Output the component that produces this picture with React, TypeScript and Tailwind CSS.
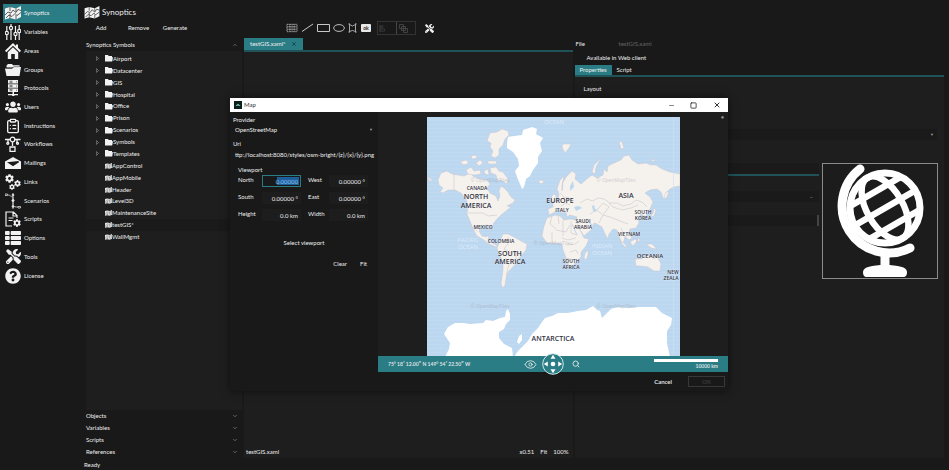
import React from "react";
import { FaQuestionCircle, FaThList, FaTools, FaCog, FaUsers } from "react-icons/fa";
import { ChevronDown, ChevronUp, ClipboardList, Minus, Square, X, Eye, Search } from "lucide-react";

type SvgProps = { className?: string };

const MapGlyph = ({ className }: SvgProps) => (
  <svg viewBox="0 0 16 14" className={className} aria-hidden="true">
    <path d="M0 2.500 5 1l6 1.500L16 0v11l-5 2.500L5 12 0 13.500Z" fill="#f2f2f2" />
    <path d="M5 1v4M5 7.500v4.500M11 2.500V6M11 9v4.500M0 9l3-3 3 1 2-3 3 2.500 2-3 3 1M1 12l3-3 3 1.500 3-3 2 2 4-3" fill="none" stroke="#3a3a3a" strokeWidth=".8" />
  </svg>
);

const SlidersGlyph = () => (
  <svg viewBox="0 0 16 16" className="size-4" fill="none" stroke="#f2f2f2" strokeWidth="1.200">
    <path d="M1.800 2v5M1.800 11v5M6 0v2M6 6v10M10.500 2v6M10.500 12v4M14.200 1v4M14.200 9v7" />
    <circle cx="1.800" cy="9" r="1.600" />
    <circle cx="6" cy="4" r="1.600" />
    <circle cx="10.500" cy="10" r="1.600" />
    <circle cx="14.200" cy="7" r="1.600" />
  </svg>
);

const HomeGlyph = () => (
  <svg viewBox="0 0 16 16" className="size-4" fill="#f2f2f2">
    <path d="M8 0 0 7.700l1.300 1.500L8 2.800l6.700 6.400L16 7.700l-3-2.900V1.500h-2v1.400z" />
    <path d="M2.800 9.200 8 4.200l5.200 5V16H9.800v-5H6.200v5H2.800z" />
  </svg>
);

const FolderGlyph = () => (
  <svg viewBox="0 0 16 16" className="size-4" fill="#f2f2f2">
    <path d="M1.500 5.500V3.500L3 2h4l1 1.200h6.500v2.300z" />
    <path d="M0 6.500h7L9 5h7l-1.500 9h-13z" />
    <path d="M1 6.200h6L9 4.700h5.500" stroke="#1a1a1a" strokeWidth=".5" fill="none" />
  </svg>
);

const ServerGlyph = () => (
  <svg viewBox="0 0 16 16" className="size-4" fill="#f2f2f2">
    <path d="M3 0h10v3.500H3zM3 4.200h10v3.500H3zM3 8.400h10v3.500H3zM7.500 12h1.500v2h4v1.200H9.700a1.500 1.500 0 0 1-2.800 0H3V14h4.500z" />
    <path d="M4.500 1.200h3M4.500 2.400h3M4.500 5.400h3M4.500 6.600h3M4.500 9.600h3M4.500 10.800h3M11 1.800h1M11 6h1M11 10.200h1" stroke="#1a1a1a" strokeWidth=".6" />
  </svg>
);

const FlowGlyph = () => (
  <svg viewBox="0 0 16 16" className="size-4" fill="none" stroke="#f2f2f2" strokeWidth="1.300">
    <circle cx="7.500" cy="3.500" r="2.300" />
    <path d="M0 3.500h5M10 3.500h5.500M7.500 6v4M3 7.500v-4M12 3.500v4M5 11h5v4.500H5z" />
    <circle cx="2.800" cy="7.300" r="1" />
    <circle cx="12.500" cy="7.300" r="1" />
  </svg>
);

const MailGlyph = () => (
  <svg viewBox="0 0 16 16" className="size-4">
    <path d="M8 2 0 6.500V14h16V6.500Z" fill="#f2f2f2" />
    <path d="M2 7.200 13.500 6l.5 1.200-6 4z" fill="#1a1a1a" />
    <path d="M0 7v7h16V7l-8 4.500z" fill="#f2f2f2" />
  </svg>
);

const GearsGlyph = () => (
  <span className="relative block size-4 text-[#f2f2f2]">
    <FaCog className="absolute left-0 top-0 size-[9px]" />
    <FaCog className="absolute right-0 top-[6px] size-[7px]" />
    <FaCog className="absolute bottom-0 left-[4px] size-[6px]" />
  </span>
);

const ScenarioGlyph = () => (
  <svg viewBox="0 0 16 16" className="size-4" fill="none" stroke="#d8d8d8">
    <path d="M0 1h2.500v1.500H0zM3 2c3 0 2 2 5 2v8c0 2 3 2 5 2M13 13.500h2.500V15H13zM8 0v16" strokeWidth=".8" />
    <circle cx="8" cy="2" r=".9" fill="#fff" />
    <circle cx="8" cy="7.500" r="1.100" fill="#fff" />
    <circle cx="8" cy="13.500" r=".9" fill="#fff" />
  </svg>
);

const ScriptGlyph = () => (
  <span className="relative block size-4 text-[#f2f2f2]">
    <svg viewBox="0 0 16 16" className="size-4" fill="none" stroke="#f2f2f2" strokeWidth="1.200">
      <path d="M7 15H1V1h7.500L12 4.500V7M8 1v4h4M3.500 7h5M3.500 9.500h4" />
    </svg>
    <FaCog className="absolute bottom-0 right-0 size-2" />
  </span>
);

const NAV: { label: string; icon: React.ReactNode }[] = [
  { label: "Synoptics", icon: <MapGlyph className="h-[14px] w-4" /> },
  { label: "Variables", icon: <SlidersGlyph /> },
  { label: "Areas", icon: <HomeGlyph /> },
  { label: "Groups", icon: <FolderGlyph /> },
  { label: "Protocols", icon: <ServerGlyph /> },
  { label: "Users", icon: <FaUsers className="size-4" /> },
  { label: "Instructions", icon: <ClipboardList className="size-4" strokeWidth={2} /> },
  { label: "Workflows", icon: <FlowGlyph /> },
  { label: "Mailings", icon: <MailGlyph /> },
  { label: "Links", icon: <GearsGlyph /> },
  { label: "Scenarios", icon: <ScenarioGlyph /> },
  { label: "Scripts", icon: <ScriptGlyph /> },
  { label: "Options", icon: <FaThList className="size-4" /> },
  { label: "Tools", icon: <FaTools className="size-[15px]" /> },
  { label: "License", icon: <FaQuestionCircle className="size-4" /> },
];

const FOLDERS = ["Airport", "Datacenter", "GIS", "Hospital", "Office", "Prison", "Scenarios", "Symbols", "Templates"];
const FILES = ["AppControl", "AppMobile", "Header", "Level3D", "MaintenanceSite", "testGIS*", "WallMgmt"];

function Sidebar() {
  return (
    <nav className="w-[78px] shrink-0 pl-[3px] pt-1">
      <div className="grid h-[281px] auto-rows-fr">
        {NAV.map((n, i) => (
          <button
            key={n.label}
            className={`flex items-center gap-[3px] pl-[2px] text-left ${i === 0 ? "bg-[#2a7d85]" : ""}`}
          >
            <span className="flex w-4 shrink-0 justify-center text-[#f2f2f2]">{n.icon}</span>
            {n.label}
          </button>
        ))}
      </div>
    </nav>
  );
}

function DrawTools() {
  return (
    <div className="flex items-center gap-[3px] text-[#c8c8c8]">
      <button aria-label="Select">
        <svg viewBox="0 0 13 10" className="h-[10px] w-[12px]" fill="none" stroke="currentColor">
          <path d="M1 1h11v8H1zM1 3.700h11M1 6.300h11M4 1v8M6.500 1v8M9 1v8" strokeDasharray="1 .7" strokeWidth=".9" />
        </svg>
      </button>
      <button aria-label="Line">
        <svg viewBox="0 0 13 10" className="h-[10px] w-[13px]" stroke="currentColor"><path d="M1 8.500 12 1" /></svg>
      </button>
      <button aria-label="Rectangle">
        <svg viewBox="0 0 13 10" className="h-[10px] w-[13px]" fill="none" stroke="currentColor"><path d="M.5 1.500h12v7H.5z" /></svg>
      </button>
      <button aria-label="Ellipse">
        <svg viewBox="0 0 13 10" className="h-[10px] w-[12px]" fill="none" stroke="currentColor"><ellipse cx="6.500" cy="5" rx="5.800" ry="3.700" /></svg>
      </button>
      <button aria-label="Polygon">
        <svg viewBox="0 0 9 10" className="h-[10px] w-[9px]" fill="none" stroke="currentColor">
          <path d="M1.500 1.500 4.500 3l3-1.500v7l-3-1-3 1z" strokeWidth=".8" />
          <path d="M.5 1h1.500M7 1h1.500M.5 9h1.500M7 9h1.500" />
        </svg>
      </button>
      <button className="ml-px flex h-2 w-[10px] items-center justify-center rounded-[1px] bg-[#e8e8e8] text-[5px] leading-none font-bold text-[#222]">ok</button>
      <div className="ml-[3px] flex h-[14px] w-[39px] border border-[#333] text-[#4a4a4a]">
        <button aria-label="Align" className="flex w-[18px] items-center pl-px">
          <svg viewBox="0 0 9 9" className="size-[7px]" fill="none" stroke="currentColor"><path d="M1 0v9M2 1h3v2H2zM2 5h5v3H2z" strokeWidth=".8" /></svg>
        </button>
        <button aria-label="Order" className="flex flex-1 items-center border-l border-[#444] pl-[2px]">
          <svg viewBox="0 0 9 9" className="size-[9px]" fill="none" stroke="currentColor"><path d="M.5.500h4v4h-4zM2.500 2.500h4v4h-4zM4.500 4.500h4v4h-4z" strokeWidth=".8" /></svg>
        </button>
      </div>
      <button aria-label="Settings" className="ml-[6px] text-[#f0f0f0]"><FaTools className="size-[9px]" /></button>
    </div>
  );
}

function SymbolPanel() {
  return (
    <section className="flex w-[158px] shrink-0 flex-col">
      <button className="flex h-[13px] items-center justify-between pl-[2px] pr-1 text-left">
        Synoptics Symbols
        <ChevronUp className="size-[6px] text-[#999]" />
      </button>
      <div className="ml-[2px] flex-1 bg-[#1e1e1e] pt-[2px]">
        <ul className="grid h-[190px] auto-rows-fr">
          {FOLDERS.map((f) => (
            <li key={f} className="flex items-center pl-[10px]">
              <svg viewBox="0 0 4 6" className="mr-[6px] h-[5px] w-[3px]" fill="none" stroke="#999"><path d="M.5.500 3.500 3 .5 5.500z" strokeWidth=".8" /></svg>
              <svg viewBox="0 0 8 7" className="h-[7px] w-2" fill="#f2f2f2"><path d="M0 0h3l.7 1H7v5.500H0zM.5 2.200h7.500L7.200 6.500H0z" /></svg>
              {f}
            </li>
          ))}
          {FILES.map((f) => (
            <li key={f} className={`flex items-center pl-[19px] ${f === "testGIS*" ? "bg-[#1a1a1a]" : ""}`}>
              <MapGlyph className="h-[6px] w-[7px]" />
              {f}
            </li>
          ))}
        </ul>
      </div>
      {["Objects", "Variables", "Scripts", "References"].map((s) => (
        <button key={s} className="flex h-[12px] items-center justify-between pl-[2px] pr-1 text-left">
          {s}
          <ChevronDown className="size-[6px] text-[#aaa]" />
        </button>
      ))}
    </section>
  );
}

function Editor() {
  return (
    <section className="ml-[2px] flex min-w-0 flex-[329] flex-col">
      <div className="flex border-b-2 border-[#1f5357]">
        <button className="flex h-[12px] w-[59px] items-center justify-between bg-[#2a7d85] px-[6px]">
          <span>testGIS.xaml*</span>
          <X className="size-[6px] text-[#123c40]" strokeWidth={3} />
        </button>
      </div>
      <div className="flex flex-1 flex-col justify-end bg-[#1e1e1e]">
        <div className="flex h-[12px] items-center pl-[2px] pr-1">
          <span className="flex-1">testGIS.xaml</span>
          <span className="flex gap-[6px]"><span>x0.51</span><span>Fit</span><span>100%</span></span>
        </div>
      </div>
    </section>
  );
}

const Globe = () => (
  <svg viewBox="0 0 114 114" className="size-[114px]" fill="none" stroke="#fff" role="img" aria-label="Globe">
    <path d="M37 5A47 47 0 0 0 87 84" strokeWidth="9" strokeLinecap="round" />
    <circle cx="62" cy="44" r="35" strokeWidth="7" />
    <g transform="rotate(-30 62 44)" strokeWidth="6.500">
      <ellipse cx="62" cy="44" rx="18" ry="35" />
      <path d="M32 25h60M27 44h70M32 63h60" />
    </g>
    <path d="M62 92v12" strokeWidth="9" />
    <path d="M40 108c0-5 9-7 22-7s22 2 22 7c0 3-1 5-4 5H44c-3 0-4-2-4-5z" fill="#fff" stroke="none" />
  </svg>
);

function Properties() {
  return (
    <section className="ml-[2px] mr-[5px] flex min-w-0 flex-[370] flex-col">
      <div className="flex h-[12px] items-center">
        <span className="w-[44px] pl-px">File</span>
        <span className="text-[#666]">testGIS.xaml</span>
      </div>
      <div className="flex h-[15px] items-center pl-[12px]">Available in Web client</div>
      <div className="flex h-[12px] border-b-2 border-[#1f5357]">
        <button className="w-[37px] bg-[#2a7d85]">Properties</button>
        <button className="px-[5px]">Script</button>
      </div>
      <div className="flex-1 bg-[#1e1e1e] pt-1">
        <div className="flex h-[16px] items-center pl-[9px]">Layout</div>
        <div className="mt-[32px] mr-[7px] flex h-[11px] items-center justify-end bg-[#1a1a1a] pr-[3px]">
          <span className="text-[4px] text-[#999]">▼</span>
        </div>
        <div className="mt-[23px] mr-[6px] flex gap-[3px]">
          <div className="flex-1">
            <div className="h-[13px] border-b-2 border-[#1f5357] bg-[#1a1a1a]" />
            <div className="mt-[15px] flex h-[11px] items-center justify-end bg-[#1a1a1a] pr-[6px] text-[#999]">–</div>
            <div className="mt-[13px] flex h-[11px] justify-end bg-[#1a1a1a]"><span className="w-[2px] bg-[#444]" /></div>
          </div>
          <div className="border border-[#8a8a8a] bg-[#1c1c1c]"><Globe /></div>
        </div>
      </div>
    </section>
  );
}

const LAND = [
  // North and Central America
  "438,180 441,173 447,171 452,174 458,175 464,176 470,173 474,177 481,179 487,180 490,184 487,188 490,193 496,196 498,201 500,196 499,191 501,186 504,188 508,192 511,197 515,200 513,203 507,206 511,207 506,211 501,215 497,219 493,224 494,229 491,226 486,225 481,226 479,231 482,236 486,237 489,235 488,240 492,243 498,246 496,247 489,244 484,240 477,236 473,229 470,221 467,214 468,206 466,199 461,193 455,190 448,190 443,193 440,192 443,188 439,185",
  // Arctic islands
  "490,168 496,167 499,171 503,172 508,179 507,184 501,180 498,181 496,175 491,173",
  "466,170 471,167 474,171 480,170 481,174 474,175 468,174",
  "460,162 466,160 469,163 464,165",
  "471,156 476,155 477,158 472,159",
  "476,163 480,160 483,163 479,166",
  "487,161 497,161 496,164 489,164",
  "484,171 488,169 489,175 485,174",
  "487,141 490,133 497,132 502,129 508,131 509,135 505,139 503,145 499,149 499,155 495,158 491,156 493,151 490,147 491,143",
  "427,176 431,179 433,182 429,180",
  "538,181 542,180 544,182 541,184",
  // South America
  "503,234 508,234 514,237 521,241 527,244 526,250 520,257 517,262 512,268 508,272 506,278 505,285 503,288 501,284 503,270 503,262 499,254 497,248 500,241",
  // Europe and Asia
  "562,191 563,182 567,176 572,171 576,174 575,179 581,184 588,178 592,175 597,178 603,175 604,169 607,172 608,166 614,163 621,160 624,156 629,155 632,160 638,164 646,163 651,165 656,165 662,169 670,172 680,174 680,186 674,187 670,189 667,192 666,199 663,198 661,192 657,189 650,190 645,193 650,197 653,202 650,209 646,213 647,217 644,216 641,214 638,219 639,223 636,228 630,229 629,233 632,238 629,240 625,236 624,241 622,243 619,236 617,230 613,229 609,234 608,239 605,234 602,227 597,224 594,223 592,229 584,236 580,230 576,222 577,217 570,215 567,217 566,212 562,213 559,209 555,212 549,215 548,209 553,207 553,203 558,200 559,194 557,189 560,180 564,176 562,185",
  "551,199 553,194 556,195 556,200 552,202",
  "562,147 563,144 567,144 571,144 569,148 565,153",
  "592,172 594,165 601,158 596,167 595,174",
  "619,141 622,142 624,148 621,149",
  "651,159 655,160 653,162",
  "664,197 666,192 669,192 666,199",
  // Africa
  "547,218 555,215 560,216 564,220 570,219 576,220 580,230 584,238 589,239 586,246 581,252 581,257 576,262 573,266 569,266 566,258 563,250 562,244 554,243 547,243 542,236 544,226",
  "585,253 588,250 588,255 586,260 584,258",
  // Southeast Asia and Oceania
  "630,242 635,239 637,241 633,246",
  "620,241 624,243 628,248 624,246",
  "638,237 640,240 638,243",
  "646,244 652,244 657,249 651,248",
  "650,217 653,213 654,208 656,210 654,216",
  "635,259 636,266 640,266 648,267 654,271 660,271 661,264 657,256 654,259 651,255 646,256 641,259",
];

const ICE = [
  "507,143 508,137 514,136 522,135 523,130 532,127 537,129 536,134 543,138 540,143 542,151 538,157 538,163 533,170 530,176 526,179 524,187 522,189 520,184 517,177 515,171 519,166 518,159 513,152 507,148",
  "445,357 449,349 450,343 444,334 448,327 455,323 463,323 470,324 483,323 486,320 493,321 500,318 505,317 506,311 508,309 510,314 510,320 506,324 504,329 499,332 499,338 504,344 512,348 513,357",
  "514,357 518,351 522,347 528,341 532,334 538,328 542,322 545,318 552,316 558,313 568,313 578,311 586,310 593,306 597,310 600,311 602,318 605,315 611,309 617,307 628,308 640,307 656,307 662,313 672,318 671,325 667,331 667,343 670,357",
  "517,342 519,336 522,334 522,340 519,344",
];

const SEAS = [
  "570,186 573,181 574,187 570,191",
  "574,207 579,206 582,208 576,211",
  "592,206 594,205 596,212 593,211",
  "571,223 573,225 578,236 576,234",
  "588,221 593,225 592,227",
];

const BORDERS =
  "M454 174v17M468 213h15l5 3 9-1M472 227l5 4M560 193l4 4 5 1M561 206l5-3 4 2M552 216l-2 8 6 5M558 216l1 8M556 230l10 2 4-7M563 220v16M571 221v12l6 2M552 232v10M562 238l6 2 8-2M567 245l8-1 4-3M570 252l6-2 2 4M567 258l7 2M580 203l7-4 6 2 5-3 6 1 6 4 7 0 6 3 8-2 5-4 6 2 5 5M590 214l8-5 5-6 6 4-6 8 7 2 10 4 8 3M609 203l4 4 9 3 9-2 7-3M508 237v7l-4 5 7 4 5-2v8l-5 4M505 258l4 6-3 12M603 215l-4 8M595 209l7 5M580 219l5 4 4-3M621 228l3 7";

type MapLabel = [string, number, number, number];
const LABELS: MapLabel[] = [
  ["CANADA", 477, 190, 5],
  ["NORTH", 476, 199, 7],
  ["AMERICA", 476, 208, 7],
  ["MEXICO", 483, 229, 5],
  ["COLOMBIA", 501, 243, 5],
  ["SOUTH", 510, 256, 7],
  ["AMERICA", 510, 264, 7],
  ["EUROPE", 560, 203, 7],
  ["ITALY", 562, 212, 5],
  ["SAUDI", 583, 223, 5],
  ["ARABIA", 583, 229, 5],
  ["ASIA", 626, 198, 7],
  ["SOUTH", 643, 214, 5],
  ["KOREA", 643, 220, 5],
  ["VIETNAM", 629, 236, 5],
  ["SOUTH", 571, 263, 5],
  ["AFRICA", 571, 269, 5],
  ["OCEANIA", 650, 258, 6],
  ["NEW", 673, 274, 5],
  ["ZEALA", 671, 280, 5],
  ["ANTARCTICA", 553, 341, 7],
];

function WorldMap() {
  return (
    <svg viewBox="427 117 253 239" className="h-[239px] w-[253px] bg-[#bcd7f0] font-['Open_Sans',sans-serif]" role="img" aria-label="World map">
      <defs>
        <pattern id="scan" width="8" height="4" patternUnits="userSpaceOnUse">
          <path d="M0 .5h8" stroke="#c6dcf2" strokeWidth=".6" />
        </pattern>
      </defs>
      <rect x="427" y="117" width="253" height="239" fill="url(#scan)" />
      <g fill="#f5f2ee" stroke="#cbc5cf" strokeWidth=".5" strokeLinejoin="round">
        {LAND.map((d) => <polygon key={d} points={d} />)}
      </g>
      <g fill="#fff">{ICE.map((d) => <polygon key={d} points={d} />)}</g>
      <g fill="#bcd7f0">{SEAS.map((d) => <polygon key={d} points={d} />)}</g>
      <path d={BORDERS} fill="none" stroke="#cdc6c9" strokeWidth=".6" />
      <path d="M673.500 117v239" stroke="#d2dfee" strokeWidth=".6" />
      <g fontSize="6" textAnchor="middle" fill="#dcebfa">
        <text x="554" y="124">OCEAN</text>
        <text x="468" y="242">PACIFIC</text>
        <text x="468" y="249">OCEAN</text>
        <text x="602" y="248">INDIAN</text>
        <text x="602" y="255">OCEAN</text>
      </g>
      <g fontSize="5" textAnchor="middle" fill="#8f959c" opacity=".4">
        <text x="490" y="182">© OpenMapTiles</text>
        <text x="616" y="182">© OpenMapTiles</text>
        <text x="553" y="245">© OpenMapTiles</text>
        <text x="490" y="308">© OpenMapTiles</text>
        <text x="616" y="308">© OpenMapTiles</text>
      </g>
      <g textAnchor="middle" fill="#33333f" stroke="#fff" strokeOpacity=".5" strokeWidth=".6" paintOrder="stroke" className="font-semibold">
        {LABELS.map(([t, x, y, s]) => <text key={t + x + y} x={x} y={y} fontSize={s}>{t}</text>)}
      </g>
    </svg>
  );
}

function Coordinate({ label, value, active }: { label: string; value: string; active?: boolean }) {
  return (
    <label className="flex items-start justify-between">
      <span className="leading-[10px]">{label}</span>
      <input
        defaultValue={value}
        className={`h-[12px] w-[39px] border px-[2px] text-right outline-none ${active ? "border-[#2a7d85] bg-[linear-gradient(#1d5f9c,#1d5f9c)] bg-[length:22px_8px] bg-[position:right_1px_center] bg-no-repeat text-[#8ec4f0]" : "border-transparent bg-[#1d1d1d]"}`}
      />
    </label>
  );
}

function MapDialog() {
  return (
    <div role="dialog" aria-label="Map" className="absolute left-[230px] top-[98px] flex w-[498px] flex-col bg-[#191919] shadow-[0_0_8px_#0008]">
      <header className="flex h-[14px] items-center bg-white pl-1 text-[#333]">
        <svg viewBox="0 0 8 8" className="mr-[2px] size-2"><path d="M0 0h8v8H0z" fill="#0b1f1c" /><path d="M1.500 5 4 2.800 6.500 5H5L4 4.200 3 5z" fill="#8fd6c2" /></svg>
        <span className="flex-1">Map</span>
        <button aria-label="Minimize" className="flex w-[22px] justify-center"><Minus className="size-[7px]" /></button>
        <button aria-label="Maximize" className="flex w-[23px] justify-center"><Square className="size-[7px]" strokeWidth={3} /></button>
        <button aria-label="Close" className="flex w-[23px] justify-center"><X className="size-2" strokeWidth={3} /></button>
      </header>
      <div className="flex">
        <form className="w-[148px] px-[3px] pt-1">
          <label htmlFor="provider" className="block h-2 leading-2">Provider</label>
          <div className="flex h-[12px] items-center">
            <select id="provider" className="flex-1 appearance-none bg-transparent pl-[2px] outline-none"><option>OpenStreetMap</option></select>
            <span className="pr-[2px] text-[4px] text-[#999]">▼</span>
          </div>
          <label htmlFor="uri" className="mt-1 block h-2 leading-2">Uri</label>
          <input id="uri" defaultValue="ttp://localhost:8080/styles/osm-bright/{z}/{x}/{y}.png" className="h-[12px] w-full bg-transparent pl-[2px] outline-none" />
          <fieldset className="mt-1 px-[5px]">
            <legend className="h-[11px] leading-[11px]">Viewport</legend>
            <div className="grid grid-cols-[63px_60px] gap-x-[7px] gap-y-[5px]">
              <Coordinate label="North" value="0.00000" active />
              <Coordinate label="West" value="0.00000 °" />
              <Coordinate label="South" value="0.00000 °" />
              <Coordinate label="East" value="0.00000 °" />
              <Coordinate label="Height" value="0.0 km" />
              <Coordinate label="Width" value="0.0 km" />
            </div>
          </fieldset>
          <button type="button" className="mt-[15px] block h-[14px] w-full">Select viewport</button>
          <div className="mt-2 flex h-[12px] justify-end gap-[13px] pr-2">
            <button type="button">Clear</button>
            <button type="button">Fit</button>
          </div>
        </form>
        <div className="min-w-0 flex-1 bg-[#1e1e1e]">
          <div className="relative flex justify-center pt-[5px]">
            <WorldMap />
            <span className="absolute right-1 top-[3px] text-[5px] leading-[5px] text-[#999]">●</span>
          </div>
          <div className="flex h-4 items-center bg-[#2a7d85] pl-[10px] pr-[10px]">
            <span className="w-[136px] text-[5px] leading-none font-semibold">75° 18′ 12.00″ N 149° 54′ 22.50″ W</span>
            <button aria-label="Show"><Eye className="size-[13px]" strokeWidth={1.500} /></button>
            <button aria-label="Pan" className="relative z-10 ml-[5px] size-[22px]">
              <svg viewBox="0 0 22 22" className="size-[22px]">
                <circle cx="11" cy="11" r="10.300" fill="#2a7d85" stroke="#cfe6e8" strokeWidth="1" />
                <circle cx="11" cy="11" r="2.300" fill="#fff" />
                <path d="M11 1.800l2.500 4h-5zM11 20.200l2.500-4h-5zM1.800 11l4-2.500v5zM20.200 11l-4-2.500v5z" fill="#fff" />
              </svg>
            </button>
            <button aria-label="Search" className="ml-2"><Search className="size-2" strokeWidth={2.500} /></button>
            <div className="ml-auto flex w-[64px] flex-col items-end gap-[2px]">
              <div className="h-[3px] w-full bg-white" />
              <span className="text-[5px] leading-[5px] font-semibold">10000 km</span>
            </div>
          </div>
        </div>
      </div>
      <footer className="flex h-[19px] items-center justify-end gap-4 pr-[3px]">
        <button className="font-semibold">Cancel</button>
        <button disabled className="h-[11px] w-[37px] border border-[#383838] text-[#444]">OK</button>
      </footer>
    </div>
  );
}

export default function App() {
  return (
    <div className="relative flex h-screen overflow-hidden bg-[#191919] font-[Lato,sans-serif] text-[6px] leading-[8px] text-[#eeeeee]">
      <Sidebar />
      <main className="flex min-w-0 flex-1 flex-col pl-[6px]">
        <header className="flex h-[24px] items-center gap-[2px] text-[8px]">
          <MapGlyph className="h-[13px] w-4" />
          Synoptics
        </header>
        <div className="flex h-2 items-center">
          <div className="flex w-[202px] shrink-0">
            <button className="w-[34px] text-center">Add</button>
            <button className="w-[41px] text-center">Remove</button>
            <button className="w-[32px] text-center">Generate</button>
          </div>
          <DrawTools />
        </div>
        <div className="flex min-h-0 flex-1 pt-[6px]">
          <SymbolPanel />
          <Editor />
          <Properties />
        </div>
        <footer className="h-[12px] pt-[3px]">Ready</footer>
      </main>
      <MapDialog />
    </div>
  );
}
